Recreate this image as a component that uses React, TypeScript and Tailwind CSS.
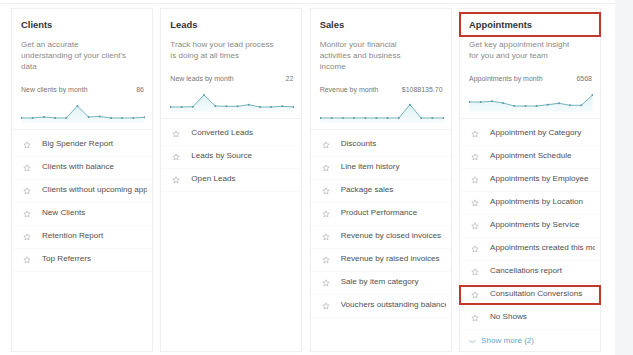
import React from "react";

type Col = {
  title: string;
  desc: string[];
  label: string;
  value: string;
  points: number[];
  items: string[];
  highlightTitle?: boolean;
  highlightItem?: string;
  showMore?: string;
};

const cols: Col[] = [
  {
    title: "Clients",
    desc: ["Get an accurate", "understanding of your client's", "data"],
    label: "New clients by month",
    value: "86",
    points: [23, 23, 22, 23, 23, 11, 22, 21.5, 23, 23, 23, 22.3],
    items: [
      "Big Spender Report",
      "Clients with balance",
      "Clients without upcoming appointments",
      "New Clients",
      "Retention Report",
      "Top Referrers",
    ],
  },
  {
    title: "Leads",
    desc: ["Track how your lead process", "is doing at all times"],
    label: "New leads by month",
    value: "22",
    points: [23, 23, 22.7, 11, 22, 22.3, 22.3, 20.7, 23, 23, 22.3, 23],
    items: ["Converted Leads", "Leads by Source", "Open Leads"],
  },
  {
    title: "Sales",
    desc: ["Monitor your financial", "activities and business", "income"],
    label: "Revenue by month",
    value: "$1088135.70",
    points: [23, 23, 23, 23, 23, 23, 23, 23, 9.7, 23, 23, 23],
    items: [
      "Discounts",
      "Line item history",
      "Package sales",
      "Product Performance",
      "Revenue by closed invoices",
      "Revenue by raised invoices",
      "Sale by item category",
      "Vouchers outstanding balance",
    ],
  },
  {
    title: "Appointments",
    desc: ["Get key appointment insight", "for you and your team"],
    label: "Appointments by month",
    value: "6568",
    points: [18, 18, 17.3, 19, 22, 22, 22, 20.7, 19.3, 21.3, 21.3, 11],
    items: [
      "Appointment by Category",
      "Appointment Schedule",
      "Appointments by Employee",
      "Appointments by Location",
      "Appointments by Service",
      "Appointments created this month",
      "Cancellations report",
      "Consultation Conversions",
      "No Shows",
    ],
    highlightTitle: true,
    highlightItem: "Consultation Conversions",
    showMore: "Show more (2)",
  },
];

function Chart({ points }: { points: number[] }) {
  const w = 124;
  const h = 28;
  const step = 123 / 11;
  const xs = points.map((_, i) => 0.5 + i * step);
  const line = points.map((y, i) => `${xs[i].toFixed(2)},${y}`).join(" ");
  const area = `${xs[0]},${h} ${line} ${xs[xs.length - 1]},${h}`;
  return (
    <svg width={w} height={h} className="block">
      <defs>
        <linearGradient id="fillg" x1="0" y1="0" x2="0" y2="1">
          <stop offset="0" stopColor="#d6eef2" stopOpacity="0.9" />
          <stop offset="1" stopColor="#eef8fa" stopOpacity="0.5" />
        </linearGradient>
      </defs>
      <polygon points={area} fill="url(#fillg)" />
      <polyline points={line} fill="none" stroke="#74b4bd" strokeWidth="1" />
      {points.map((y, i) => (
        <circle key={i} cx={xs[i]} cy={y} r="1" fill="#5e9aa3" />
      ))}
    </svg>
  );
}

function Star() {
  return (
    <svg width="8" height="8" viewBox="0 0 24 24" className="shrink-0">
      <path
        d="M12 2.5l2.9 6.2 6.7.7-5 4.6 1.4 6.6L12 17.3l-6 3.3 1.4-6.6-5-4.6 6.7-.7z"
        fill="none"
        stroke="#a8a8a8"
        strokeWidth="1.8"
        strokeLinejoin="round"
      />
    </svg>
  );
}

function Card({ c }: { c: Col }) {
  return (
    <div className="relative flex h-[344px] w-[142px] flex-col border border-[#efefef] bg-white shadow-[0_0_2px_rgba(0,0,0,0.03)]">
      {c.highlightTitle && (
        <div className="absolute -left-[1px] top-[3px] h-[25px] w-[142px] border-2 border-[#c0392b]" />
      )}
      <div className="pl-[9px] pr-[8px] pt-[10px]">
        <h2 className="text-[9.4px] font-bold leading-[12px] text-[#333]">{c.title}</h2>
        <p className="mt-[7.5px] text-[8.1px] leading-[11px] text-[#8a8a8a]">
          {c.desc.map((d, i) => (
            <React.Fragment key={i}>
              {d}
              {i < c.desc.length - 1 && <br />}
            </React.Fragment>
          ))}
        </p>
        <div className="mt-[13px] flex justify-between text-[7px] leading-[10px] text-[#777]">
          <span>{c.label}</span>
          <span>{c.value}</span>
        </div>
        <Chart points={c.points} />
      </div>
      <div className="mt-[6.5px] border-t border-[#f0f0f0] pt-[3.5px]">
        {c.items.map((it) => (
          <div
            key={it}
            className="relative flex h-[23px] items-center border-b border-[#f9f9f9] pl-[11px] pr-[5px] text-[8.1px] text-[#505050]"
          >
            {c.highlightItem === it && (
              <div className="absolute -left-[1px] -right-[1px] top-[1.5px] bottom-[1px] border-2 border-[#c0392b]" />
            )}
            <Star />
            <span className="ml-[11px] min-w-0 flex-1 overflow-hidden whitespace-nowrap">{it}</span>
          </div>
        ))}
        {c.showMore && (
          <div className="flex h-[23px] items-center pl-[9px] text-[8.1px] text-[#6a9fcc]">
            <svg width="7" height="5" viewBox="0 0 7 5" className="shrink-0">
              <path d="M0.5 1l3 3 3-3" fill="none" stroke="#8fb6d8" strokeWidth="0.9" />
            </svg>
            <span className="ml-[5px]">{c.showMore}</span>
          </div>
        )}
      </div>
    </div>
  );
}

export default function App() {
  return (
    <div
      className="flex h-[355px] w-[633px] overflow-hidden bg-white"
      style={{ fontFamily: '"Liberation Sans", Arial, sans-serif' }}
    >
      <div className="flex w-[615px] flex-col">
        <div className="h-[4px] border-b border-[#eeeeee]" />
        <div className="grid grid-cols-[142px_142px_142px_142px] gap-x-[7.33px] pl-[11px] pt-[4px]">
          {cols.map((c) => (
            <Card key={c.title} c={c} />
          ))}
        </div>
      </div>
      <div className="flex-1 bg-[#f4f5f7]" />
    </div>
  );
}
